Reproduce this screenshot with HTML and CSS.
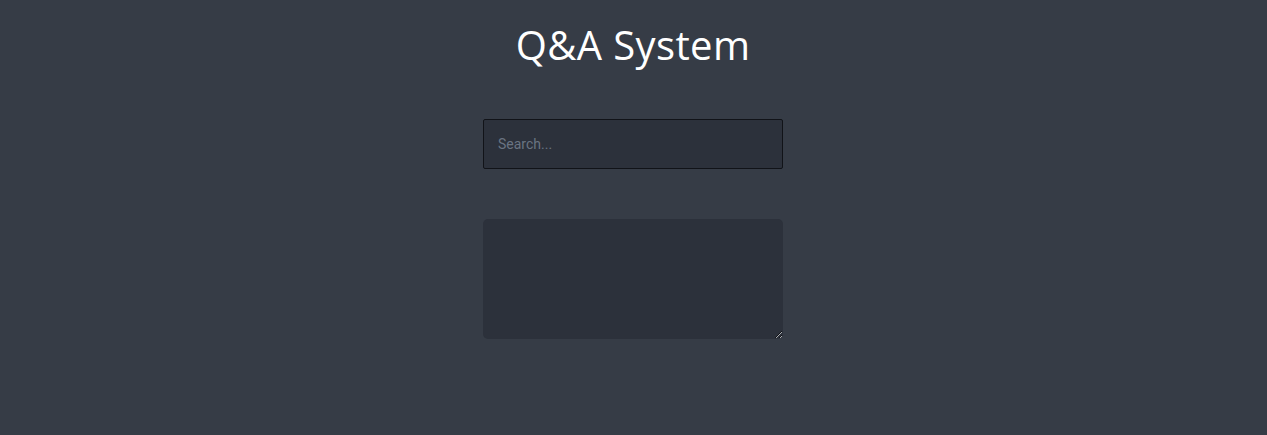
FILE: index.html
```html
<!DOCTYPE html>
<html lang="en">
<head>
<meta charset="utf-8">
<title>Q&amp;A System</title>
<link rel="stylesheet" href="styles.css">
</head>
<body>
<div class="app">
  <h1 class="title">Q&amp;A System</h1>
  <input class="search" type="text" placeholder="Search...">
  <textarea class="answer"></textarea>
</div>
</body>
</html>
```
FILE: styles.css
```css
html, body {
  margin: 0;
  padding: 0;
  background: #363c46;
  height: 100%;
}
.app {
  display: flex;
  flex-direction: column;
  align-items: center;
  padding-top: 18px;
  padding-right: 1px;
}
.title {
  margin: 0;
  font-family: "Open Sans", "Noto Sans", sans-serif;
  font-weight: 400;
  font-size: 40px;
  letter-spacing: 0.4px;
  line-height: 54px;
  color: #ffffff;
}
.search {
  margin-top: 47px;
  width: 300px;
  height: 50px;
  box-sizing: border-box;
  background: #2c313b;
  border: 1px solid #111318;
  border-radius: 2px;
  padding: 0 14px;
  font-family: Roboto, "Liberation Sans", sans-serif;
  font-size: 14px;
  color: #d0d4da;
  outline: none;
}
.search::placeholder {
  color: #6a7482;
}
.answer {
  margin-top: 50px;
  width: 300px;
  height: 120px;
  box-sizing: border-box;
  background: #2c313b;
  border: none;
  border-radius: 5px;
  outline: none;
  color: #d0d4da;
  resize: both;
}
```
